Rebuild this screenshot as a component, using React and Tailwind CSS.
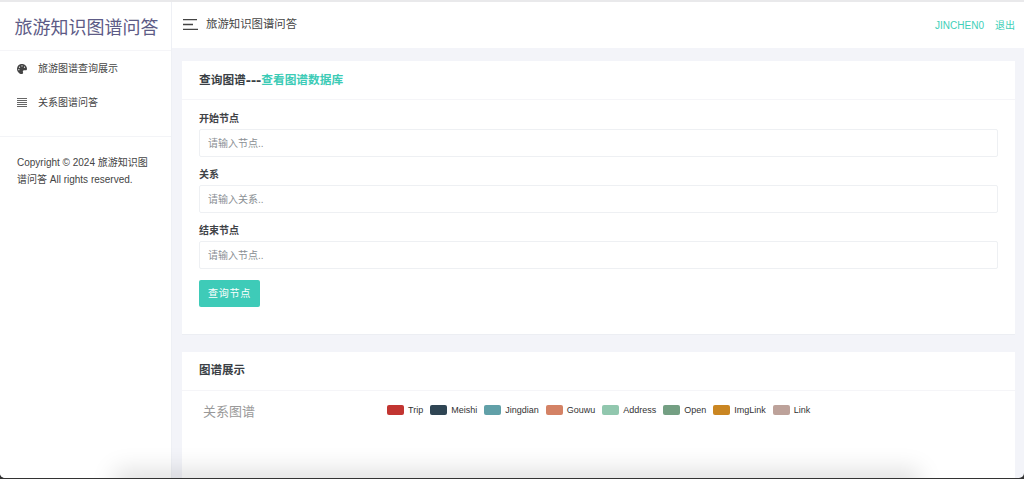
import { FaPalette } from "react-icons/fa";

const sans = "font-['Liberation_Sans','Noto_Sans_CJK_SC',sans-serif]";

const fields = [
  { label: "开始节点", placeholder: "请输入节点.." },
  { label: "关系", placeholder: "请输入关系.." },
  { label: "结束节点", placeholder: "请输入节点.." },
];

const legend = [
  { name: "Trip", color: "bg-[#c23531]" },
  { name: "Meishi", color: "bg-[#2f4554]" },
  { name: "Jingdian", color: "bg-[#61a0a8]" },
  { name: "Gouwu", color: "bg-[#d48265]" },
  { name: "Address", color: "bg-[#91c7ae]" },
  { name: "Open", color: "bg-[#749f83]" },
  { name: "ImgLink", color: "bg-[#ca8622]" },
  { name: "Link", color: "bg-[#bda29a]" },
];

function ListIcon() {
  return (
    <svg width="10" height="9" viewBox="0 0 10 9" fill="none" stroke="#666" strokeWidth="1">
      <path d="M0 .5h10M0 2.5h10M0 4.5h10M0 6.5h10M0 8.5h10" />
    </svg>
  );
}

function MenuIcon() {
  return (
    <svg width="15" height="11" viewBox="0 0 15 11" fill="none" stroke="#444" strokeWidth="1.3">
      <path d="M0 .7h14M0 5.5h10M0 10.3h15" />
    </svg>
  );
}

function Sidebar() {
  return (
    <aside className="w-[172px] shrink-0 bg-white border-r border-[#eef0f5]">
      <div className="h-[49px] flex items-center justify-center pl-[2px] border-b border-[#f5f5f8]">
        <span className="text-[18px] leading-none text-[#5d5b86] font-['Noto_Sans_CJK_SC',serif]">
          旅游知识图谱问答
        </span>
      </div>
      <nav className="h-[86px] border-b border-[#f3f4f7] text-[10px] text-[#444]">
        <div className="h-[35px] flex items-center pl-[17px] gap-[11px]">
          <FaPalette className="w-[10px] h-[10px] text-[#444]" />
          <span>旅游图谱查询展示</span>
        </div>
        <div className="h-[33px] flex items-center pl-[17px] gap-[11px]">
          <ListIcon />
          <span>关系图谱问答</span>
        </div>
      </nav>
      <p className="px-[17px] pt-[17px] text-[10px] leading-[17px] text-[#444]">
        Copyright © 2024 旅游知识图谱问答 All rights reserved.
      </p>
    </aside>
  );
}

function Header() {
  return (
    <header className="h-[46px] shrink-0 bg-white flex items-center justify-between pl-[11px] pr-[9px]">
      <div className="flex items-center gap-[8px]">
        <MenuIcon />
        <span className="text-[11.4px] text-[#444]">旅游知识图谱问答</span>
      </div>
      <div className="flex items-center gap-[11px] text-[10px] text-[#3ecfb8]">
        <span>JINCHEN0</span>
        <span>退出</span>
      </div>
    </header>
  );
}

function QueryCard() {
  return (
    <section className="bg-white border-b border-[#eceef3]">
      <div className="h-[39px] flex items-center px-[17px] border-b border-[#f5f5f8] text-[11.7px] font-bold text-[#3a3f45]">
        查询图谱<span className="text-[15.5px] leading-none">---</span>
        <span className="text-[#3ccbb6]">查看图谱数据库</span>
      </div>
      <form className="px-[17px] pt-[11px] pb-[27px]">
        {fields.map((f) => (
          <div key={f.label} className="mb-[10.2px]">
            <label className="block h-[18px] leading-[16px] text-[10px] font-bold text-[#3f4347]">{f.label}</label>
            <input
              placeholder={f.placeholder}
              className="block w-full h-[28px] px-[8px] text-[10px] bg-white border border-[#eef0f3] rounded-[2px] placeholder:text-[#8a8f94] outline-none"
            />
          </div>
        ))}
        <button
          type="button"
          className="block w-[61px] h-[27px] bg-[#3ecbb8] text-white text-[10px] tracking-[0.7px] rounded-[2px]"
        >
          查询节点
        </button>
      </form>
    </section>
  );
}

function GraphCard() {
  return (
    <section className="bg-white flex-1">
      <div className="h-[39px] flex items-center px-[17px] border-b border-[#f5f5f8] text-[11.5px] font-bold text-[#3a3f45]">
        图谱展示
      </div>
      <div className="flex items-start pt-[12px] pl-[21px]">
        <span className="w-[184px] text-[13px] leading-[18px] text-[#999]">关系图谱</span>
        <ul className="flex gap-[7px] pt-[2px]">
          {legend.map((l) => (
            <li key={l.name} className="flex items-center gap-[4px] text-[9px] leading-[10px] text-[#333]">
              <i className={`block w-[17px] h-[10px] rounded-[2px] ${l.color}`} />
              {l.name}
            </li>
          ))}
        </ul>
      </div>
    </section>
  );
}

export default function App() {
  return (
    <div className="h-[479px] bg-[#333]">
      <div className={`relative h-[478px] overflow-hidden rounded-b-[5px] flex flex-col bg-[#f3f4f9] ${sans}`}>
        <div className="h-[2px] shrink-0 bg-[#e9e9eb]" />
        <div className="flex flex-1 min-h-0">
          <Sidebar />
          <div className="flex-1 min-w-0 flex flex-col">
            <Header />
            <main className="flex-1 min-h-0 flex flex-col gap-[17px] pt-[13px] pl-[10px] pr-[9px]">
              <QueryCard />
              <GraphCard />
            </main>
          </div>
        </div>
        {/* drop shadow of the window underneath, just past the bottom edge */}
        <div className="absolute left-[125px] right-[115px] -bottom-[12px] h-[10px] shadow-[0_0_24px_10px_rgba(0,0,0,0.13)]" />
      </div>
    </div>
  );
}
